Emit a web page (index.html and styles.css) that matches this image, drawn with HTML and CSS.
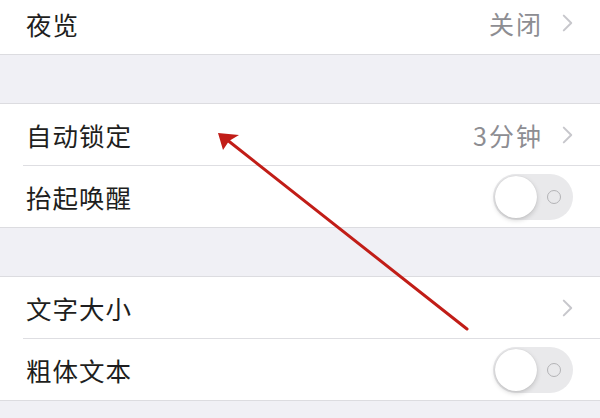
FILE: index.html
```html
<!DOCTYPE html>
<html lang="zh">
<head>
    <meta charset="UTF-8">
    <title>显示与亮度</title>
    <link rel="stylesheet" href="styles.css">
</head>
<body>
<div class="screen">
    <div class="group">
        <div class="cell">
            <span class="cell__title">夜览</span>
            <span class="cell__value">关闭</span>
            <svg class="chevron" viewBox="0 0 10 17"><polyline points="1.5,1.5 8.5,8.5 1.5,15.5"/></svg>
        </div>
    </div>

    <div class="group">
        <div class="cell">
            <span class="cell__title">自动锁定</span>
            <span class="cell__value">3分钟</span>
            <svg class="chevron" viewBox="0 0 10 17"><polyline points="1.5,1.5 8.5,8.5 1.5,15.5"/></svg>
        </div>
        <div class="cell">
            <span class="cell__title">抬起唤醒</span>
            <span class="switch"><span class="switch__knob"></span><span class="switch__off"></span></span>
        </div>
    </div>

    <div class="group">
        <div class="cell">
            <span class="cell__title">文字大小</span>
            <svg class="chevron" viewBox="0 0 10 17"><polyline points="1.5,1.5 8.5,8.5 1.5,15.5"/></svg>
        </div>
        <div class="cell">
            <span class="cell__title">粗体文本</span>
            <span class="switch"><span class="switch__knob"></span><span class="switch__off"></span></span>
        </div>
    </div>

    <!-- red pointer drawn over the screenshot -->
    <svg class="pointer" viewBox="0 0 600 418">
        <line x1="467" y1="329" x2="226" y2="139"/>
        <polygon points="218,133 239,135 229,141 223,150"/>
    </svg>
</div>
</body>
</html>
```

FILE: styles.css
```css
* {
    margin: 0;
    box-sizing: border-box;
}

body {
    background: #f0f0f5;
    font-family: "Noto Sans CJK SC", "Noto Sans", sans-serif;
    overflow: hidden;
}

.screen {
    position: relative;
    width: 600px;
    height: 418px;
    margin-top: -8px;
    display: flex;
    flex-direction: column;
    gap: 48px;
}

.group {
    background: #fff;
    border-top: 1px solid #dcdce0;
    border-bottom: 1px solid #dcdce0;
}

.group:first-child {
    border-top: none;
}

.group:first-child .cell {
    height: 62px;
}

.cell {
    height: 61px;
    display: flex;
    align-items: center;
    padding: 0 27px 0 26px;
    position: relative;
}

.cell + .cell {
    height: 62px;
    border-top: 1px solid #dedee2;
    margin-left: 23px;
    padding-left: 3px;
}

.cell__title {
    flex: 1;
    font-size: 25.5px;
    color: #1e1e20;
    letter-spacing: 1px;
}

.cell__value {
    font-size: 25px;
    color: #8d8d92;
    letter-spacing: 2px;
    margin-right: 19px;
}

.chevron {
    width: 11px;
    height: 18px;
    fill: none;
    stroke: #c7c7cc;
    stroke-width: 1.9;
    stroke-linecap: round;
    stroke-linejoin: round;
}

.switch {
    width: 80px;
    height: 46px;
    border-radius: 23px;
    background: #e9e9eb;
    display: flex;
    align-items: center;
    padding: 0 12px 0 2px;
    justify-content: space-between;
}

.switch__knob {
    width: 42px;
    height: 42px;
    border-radius: 50%;
    background: #fff;
    box-shadow: 0 2px 5px rgba(0, 0, 0, 0.18), 0 0 1px rgba(0, 0, 0, 0.12);
}

.switch__off {
    width: 14px;
    height: 14px;
    border-radius: 50%;
    border: 1.5px solid #b3b3b6;
}

.pointer {
    position: absolute;
    top: 8px;
    left: 0;
    width: 600px;
    height: 418px;
}

.pointer line {
    stroke: #c11d17;
    stroke-width: 3;
    stroke-linecap: round;
}

.pointer polygon {
    fill: #c11d17;
}
```
